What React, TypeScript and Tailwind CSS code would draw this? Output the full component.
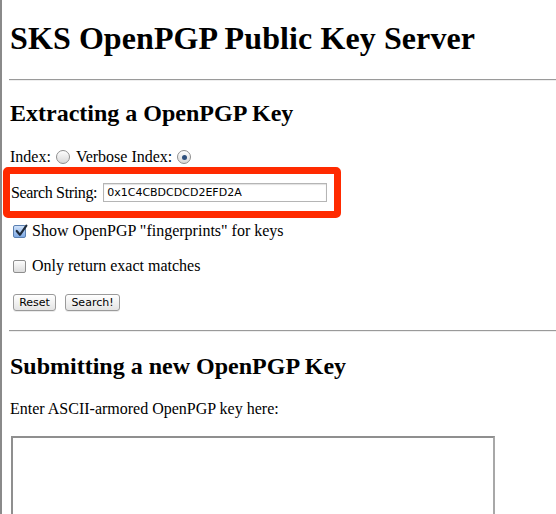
import React, { useState } from "react";

const serif = { fontFamily: '"Liberation Serif", "Times New Roman", serif' };

const Radio = ({ checked, onClick }: { checked: boolean; onClick: () => void }) => (
  <span
    onClick={onClick}
    className="inline-flex items-center justify-center w-[14px] h-[14px] rounded-full border border-[#8e8e8e] bg-gradient-to-b from-[#fdfdfd] to-[#d9d9d9] align-[-2px] shadow-[inset_0_1px_1px_rgba(255,255,255,0.8)]"
  >
    {checked && <span className="w-[5px] h-[5px] rounded-full bg-[#2d4f7c]" />}
  </span>
);

const Check = ({ checked, onClick }: { checked: boolean; onClick: () => void }) => (
  <span
    onClick={onClick}
    className={
      "relative inline-block w-[13px] h-[13px] rounded-[2px] border align-[-2px] " +
      (checked ? "border-[#5a7fb0] bg-gradient-to-b from-[#cfe2fb] to-[#7ea9e4]" : "border-[#8e8e8e] bg-gradient-to-b from-[#fdfdfd] to-[#dcdcdc]")
    }
  >
    {checked && (
      <svg viewBox="0 0 13 13" className="absolute -top-[2px] left-[0px] w-[14px] h-[14px]">
        <path d="M2.5 6.5 L5.5 10 L11.5 1.5" fill="none" stroke="#1d2a3a" strokeWidth="2" strokeLinecap="round" strokeLinejoin="round" />
      </svg>
    )}
  </span>
);

const Btn = ({ label, w }: { label: string; w: string }) => (
  <button
    className={
      "h-[17px] rounded-[3px] border border-[#9a9a9a] bg-gradient-to-b from-white to-[#e4e4e4] text-[11px] leading-[15px] text-black shadow-[0_1px_0_rgba(0,0,0,0.08)] " +
      w
    }
    style={{ fontFamily: '"DejaVu Sans", "Liberation Sans", sans-serif' }}
  >
    {label}
  </button>
);

export default function App() {
  const [verbose, setVerbose] = useState(true);
  const [fingerprints, setFingerprints] = useState(true);
  const [exact, setExact] = useState(false);
  const [search, setSearch] = useState("0x1C4CBDCDCD2EFD2A");

  return (
    <div className="min-h-screen bg-white border-l-2 border-[#8a8a8a] text-black" style={serif}>
      <div className="pl-[7px]">
        <h1 className="pt-[20px] text-[32px] leading-[37px] font-bold pl-[1px] tracking-[0.1px]">SKS OpenPGP Public Key Server</h1>
        <div className="mt-[22px] h-[2px] border-t border-[#9a9a9a] bg-[#eeeeee]" />

        <h2 className="mt-[18px] text-[24px] leading-[28px] font-bold pl-[1px]">Extracting a OpenPGP Key</h2>

        <div className="mt-[21px] text-[16px] leading-[18px] pl-[1px] flex items-center gap-[5px]">
          <span>Index:</span>
          <Radio checked={!verbose} onClick={() => setVerbose(false)} />
          <span className="ml-[1px]">Verbose Index:</span>
          <Radio checked={verbose} onClick={() => setVerbose(true)} />
        </div>

        <div className="-ml-[6px] mt-[1px] w-[338px] h-[51px] border-[7px] border-[#ff2a00] rounded-[5px] flex items-center pl-[1px]">
          <span className="text-[16px] leading-[18px] tracking-[-0.35px]">Search String:</span>
          <input
            value={search}
            onChange={(e) => setSearch(e.target.value)}
            className="ml-[6px] w-[224px] h-[19px] border border-[#b5b5b5] shadow-[inset_0_1px_1px_rgba(0,0,0,0.12)] px-[3px] text-[11px] text-black outline-none"
            style={{ fontFamily: '"DejaVu Sans", "Liberation Sans", sans-serif' }}
          />
        </div>

        <div className="mt-[4px] text-[16px] leading-[18px] pl-[4px] flex items-center gap-[6px]">
          <Check checked={fingerprints} onClick={() => setFingerprints(!fingerprints)} />
          <span>Show OpenPGP "fingerprints" for keys</span>
        </div>

        <div className="mt-[17px] text-[16px] leading-[18px] pl-[4px] flex items-center gap-[6px]">
          <Check checked={exact} onClick={() => setExact(!exact)} />
          <span>Only return exact matches</span>
        </div>

        <div className="mt-[19px] pl-[4px] flex gap-[9px]">
          <Btn label="Reset" w="w-[43px]" />
          <Btn label="Search!" w="w-[55px]" />
        </div>

        <div className="mt-[19px] h-[2px] border-t border-[#9a9a9a] bg-[#eeeeee]" />

        <h2 className="mt-[20px] text-[24px] leading-[28px] font-bold pl-[1px]">Submitting a new OpenPGP Key</h2>

        <p className="mt-[20px] text-[16px] leading-[18px] pl-[1px]">Enter ASCII-armored OpenPGP key here:</p>

        <textarea className="mt-[18px] ml-[2px] block w-[484px] h-[200px] border-2 border-[#8f8f8f] border-r-[#a8a8a8] border-b-[#cfcfcf] resize-none outline-none" />
      </div>
    </div>
  );
}
